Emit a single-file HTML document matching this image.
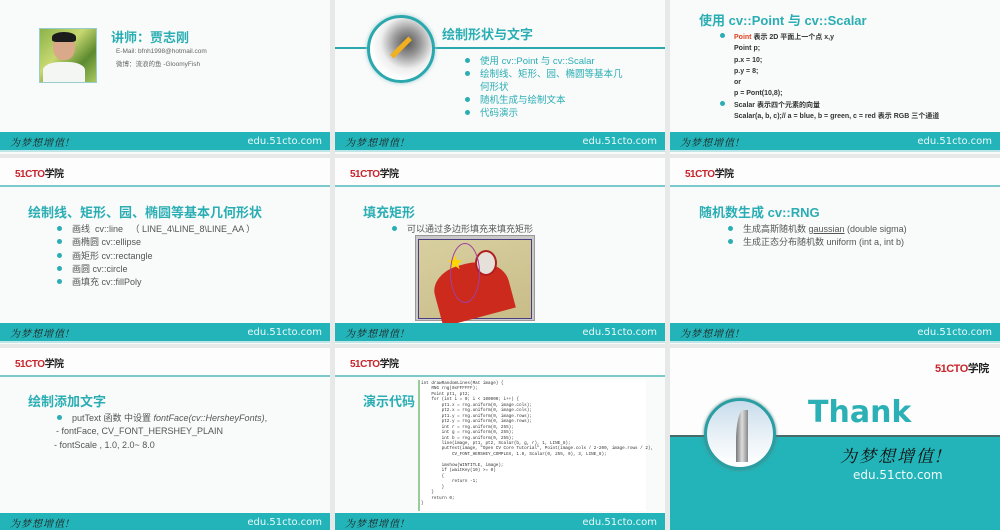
<!DOCTYPE html>
<html><head><meta charset="utf-8"><style>
*{margin:0;padding:0;box-sizing:border-box}
body{width:1000px;height:530px;background:#e7e9e9;position:relative;overflow:hidden;font-family:"Liberation Sans","Noto Sans CJK SC",sans-serif}
.s{position:absolute;background:#f9fafa;overflow:hidden;width:330px}
.a{position:absolute;white-space:nowrap}
.ft{position:absolute;left:0;width:330px;height:20px;background:#22b4b8;border-bottom:2px solid #bfe6e6}
.ft .w{position:absolute;left:10px;top:3px;font-size:10px;line-height:13px;font-style:italic;color:#222;font-family:"Noto Serif CJK SC",serif;letter-spacing:1px}
.ft .u{position:absolute;right:8px;top:3px;font-size:10px;line-height:13px;color:#eafafa;font-family:"DejaVu Sans",sans-serif}
.lg{position:absolute;left:15px;font-weight:bold;font-size:10px;color:#c8242c;font-family:"Liberation Sans Narrow","Liberation Sans",sans-serif;letter-spacing:-0.5px}
.lg span{color:#222;font-family:"Noto Sans CJK SC",sans-serif}
.ln{position:absolute;left:0;width:330px;height:2px;background:#7cc9cb}
.hd{position:absolute;left:0;width:330px;background:#fdfdfd}
.t{color:#2aaeb4;font-weight:bold;font-size:13px}
.b{font-size:9px;color:#555;line-height:13.3px}
.d{display:inline-block;width:5px;height:5px;border-radius:50%;background:#2aaeb4;margin-right:10px;vertical-align:1px}
</style></head><body>

<!-- slide 1 -->
<div class="s" style="left:0;top:0;height:154px">
 <div class="a" style="left:39px;top:28px;width:58px;height:55px;border:1px solid #9cc;background:linear-gradient(135deg,#8bb34a,#c8d870 40%,#5c8a30 70%,#a9c860)"></div>
 <div class="a" style="left:53px;top:34px;width:22px;height:26px;border-radius:45%;background:#d9a98a"></div>
 <div class="a" style="left:52px;top:32px;width:24px;height:10px;border-radius:50% 50% 20% 20%;background:#1c1c1c"></div>
 <div class="a" style="left:43px;top:62px;width:42px;height:20px;border-radius:40% 40% 0 0;background:#f4f6f4"></div>
 <div class="a t" style="left:111px;top:27px;font-size:13px">讲师：贾志刚</div>
 <div class="a" style="left:116px;top:48px;font-size:6.5px;color:#666">E-Mail: bfnh1998@hotmail.com</div>
 <div class="a" style="left:116px;top:58px;font-size:6.5px;color:#666">微博：流浪的鱼 -GloomyFish</div>
 <div class="ft" style="top:132px"><div class="w">为梦想增值!</div><div class="u">edu.51cto.com</div></div>
</div>

<!-- slide 2 -->
<div class="s" style="left:335px;top:0;height:154px">
 <div class="a" style="left:0;top:47px;width:330px;height:2px;background:#2aa8ad"></div>
 <div class="a" style="left:32px;top:15px;width:68px;height:68px;border-radius:50%;background:radial-gradient(circle at 60% 40%,#555 0,#999 25%,#eee 50%,#fff 70%);border:3px solid #2aa8ad;box-shadow:0 0 4px #9cc"></div>
 <div class="a" style="left:53px;top:45px;width:26px;height:5px;background:#f0b020;transform:rotate(-45deg)"></div>
 <div class="a t" style="left:107px;top:24px">绘制形状与文字</div>
 <div class="a b" style="left:130px;top:55px;color:#2aaeb4;font-size:9.5px;line-height:13px">
  <div><span class="d"></span>使用 cv::Point 与 cv::Scalar</div>
  <div><span class="d"></span>绘制线、矩形、园、椭圆等基本几</div>
  <div style="padding-left:15px">何形状</div>
  <div><span class="d"></span>随机生成与绘制文本</div>
  <div><span class="d"></span>代码演示</div>
 </div>
 <div class="ft" style="top:132px"><div class="w">为梦想增值!</div><div class="u">edu.51cto.com</div></div>
</div>

<!-- slide 3 -->
<div class="s" style="left:670px;top:0;height:154px">
 <div class="a t" style="left:29px;top:10px">使用 cv::Point 与 cv::Scalar</div>
 <div class="a" style="left:50px;top:32px;font-size:7px;color:#333;font-weight:bold;line-height:11.3px">
  <div><span class="d" style="margin-right:9px"></span><span style="color:#d42">Point</span> 表示 2D 平面上一个点 x,y</div>
  <div style="padding-left:14px">Point p;</div>
  <div style="padding-left:14px">p.x = 10;</div>
  <div style="padding-left:14px">p.y = 8;</div>
  <div style="padding-left:14px">or</div>
  <div style="padding-left:14px">p = Pont(10,8);</div>
  <div><span class="d" style="margin-right:9px"></span>Scalar 表示四个元素的向量</div>
  <div style="padding-left:14px">Scalar(a, b, c);// a = blue, b = green, c = red 表示 RGB 三个通道</div>
 </div>
 <div class="ft" style="top:132px"><div class="w">为梦想增值!</div><div class="u">edu.51cto.com</div></div>
</div>

<!-- row 2 -->
<div class="s" style="left:0;top:158px;height:186px">
 <div class="hd" style="top:0;height:27px"></div><div class="lg" style="top:7px">51CTO<span>学院</span></div><div class="ln" style="top:27px"></div>
 <div class="a t" style="left:28px;top:44px">绘制线、矩形、园、椭圆等基本几何形状</div>
 <div class="a b" style="left:57px;top:65px">
  <div><span class="d"></span>画线&nbsp; cv::line&nbsp;&nbsp; （ LINE_4\LINE_8\LINE_AA ）</div>
  <div><span class="d"></span>画椭圆 cv::ellipse</div>
  <div><span class="d"></span>画矩形 cv::rectangle</div>
  <div><span class="d"></span>画圆 cv::circle</div>
  <div><span class="d"></span>画填充 cv::fillPoly</div>
 </div>
 <div class="ft" style="top:165px"><div class="w">为梦想增值!</div><div class="u">edu.51cto.com</div></div>
</div>

<div class="s" style="left:335px;top:158px;height:186px">
 <div class="hd" style="top:0;height:27px"></div><div class="lg" style="top:7px">51CTO<span>学院</span></div><div class="ln" style="top:27px"></div>
 <div class="a t" style="left:28px;top:44px">填充矩形</div>
 <div class="a b" style="left:57px;top:65px"><span class="d"></span>可以通过多边形填充来填充矩形</div>
 <div class="a" style="left:80px;top:77px;width:120px;height:86px;background:#c9c9c9;border:1px solid #999"></div>
 <div class="a" style="left:83px;top:81px;width:114px;height:80px;background:linear-gradient(160deg,#d8cfa0,#c8bc88);border:1px solid #4a3c80"></div>
 <div class="a" style="left:100px;top:105px;width:75px;height:55px;background:#cc2a1c;border-radius:40% 50% 0 0;transform:rotate(-15deg)"></div>
 <div class="a" style="left:140px;top:92px;width:22px;height:26px;background:#e6e0da;border-radius:50%;border:2px solid #b02020"></div>
 <div class="a" style="left:112px;top:98px;font-size:16px;color:#ffd700;line-height:16px">★</div>
 <div class="a" style="left:115px;top:85px;width:30px;height:60px;border:1px solid #a040a0;border-radius:50%"></div>
 <div class="ft" style="top:165px"><div class="w">为梦想增值!</div><div class="u">edu.51cto.com</div></div>
</div>

<div class="s" style="left:670px;top:158px;height:186px">
 <div class="hd" style="top:0;height:27px"></div><div class="lg" style="top:7px">51CTO<span>学院</span></div><div class="ln" style="top:27px"></div>
 <div class="a t" style="left:29px;top:44px">随机数生成 cv::RNG</div>
 <div class="a b" style="left:58px;top:65px">
  <div><span class="d"></span>生成高斯随机数 <u>gaussian</u> (double sigma)</div>
  <div><span class="d"></span>生成正态分布随机数 uniform (int a, int b)</div>
 </div>
 <div class="ft" style="top:165px"><div class="w">为梦想增值!</div><div class="u">edu.51cto.com</div></div>
</div>

<!-- row 3 -->
<div class="s" style="left:0;top:348px;height:182px">
 <div class="hd" style="top:0;height:27px"></div><div class="lg" style="top:7px">51CTO<span>学院</span></div><div class="ln" style="top:27px"></div>
 <div class="a t" style="left:28px;top:43px">绘制添加文字</div>
 <div class="a b" style="left:57px;top:64px">
  <div><span class="d"></span>putText 函数 中设置 <i>fontFace(cv::HersheyFonts)</i>,</div>
  <div style="margin-left:-1px">- fontFace, CV_FONT_HERSHEY_PLAIN</div>
  <div style="margin-left:-3px">- fontScale , 1.0, 2.0~ 8.0</div>
 </div>
 <div class="ft" style="top:165px"><div class="w">为梦想增值!</div><div class="u">edu.51cto.com</div></div>
</div>

<div class="s" style="left:335px;top:348px;height:182px">
 <div class="hd" style="top:0;height:27px"></div><div class="lg" style="top:7px">51CTO<span>学院</span></div><div class="ln" style="top:27px"></div>
 <div class="a t" style="left:28px;top:43px">演示代码</div>
 <div class="a" style="left:83px;top:32px;width:228px;height:131px;background:#fff;border-left:2px solid #9c9"></div>
 <pre class="a" style="white-space:pre;left:86px;top:33px;font-family:'Liberation Mono',monospace;font-size:4.3px;line-height:5.45px;color:#333">int drawRandomLines(Mat image) {
    RNG rng(0xFFFFFF);
    Point pt1, pt2;
    for (int i = 0; i &lt; 100000; i++) {
        pt1.x = rng.uniform(0, image.cols);
        pt2.x = rng.uniform(0, image.cols);
        pt1.y = rng.uniform(0, image.rows);
        pt2.y = rng.uniform(0, image.rows);
        int r = rng.uniform(0, 255);
        int g = rng.uniform(0, 255);
        int b = rng.uniform(0, 255);
        line(image, pt1, pt2, Scalar(b, g, r), 1, LINE_8);
        putText(image, "Open CV Core Tutorial", Point(image.cols / 2-200, image.rows / 2),
            CV_FONT_HERSHEY_COMPLEX, 1.0, Scalar(0, 255, 0), 3, LINE_8);

        imshow(WINTITLE, image);
        if (waitKey(10) &gt;= 0)
        {
            return -1;
        }
    }
    return 0;
}</pre>
 <div class="ft" style="top:165px"><div class="w">为梦想增值!</div><div class="u">edu.51cto.com</div></div>
</div>

<div class="s" style="left:670px;top:348px;height:182px;background:#fdfdfd">
 <div class="a" style="left:0;top:87px;width:330px;height:95px;background:#22b4b8;border-top:2px solid #4a6a6a"></div>
 <div class="lg" style="left:265px;top:12px;font-size:11px">51CTO<span>学院</span></div>
 <div class="a" style="left:34px;top:50px;width:72px;height:72px;border-radius:50%;background:linear-gradient(#c8dcec,#eef4f8 60%,#fff);border:3px solid #2a9ea2;box-shadow:0 0 3px #588"></div>
 <div class="a" style="left:66px;top:62px;width:12px;height:52px;background:linear-gradient(90deg,#777,#ddd,#888);border-radius:60% 0 0 0"></div>
 <div class="a" style="left:138px;top:48px;font-size:30px;line-height:34px;font-weight:bold;color:#2ab0b5;font-family:'DejaVu Sans',sans-serif">Thank</div>
 <div class="a" style="left:170px;top:97px;font-size:17px;line-height:20px;font-style:italic;color:#111;font-family:'Noto Serif CJK SC',serif;letter-spacing:2px">为梦想增值!</div>
 <div class="a" style="left:183px;top:120px;font-size:12px;line-height:15px;color:#f0fafa;font-family:'DejaVu Sans',sans-serif">edu.51cto.com</div>
</div>
</body></html>
